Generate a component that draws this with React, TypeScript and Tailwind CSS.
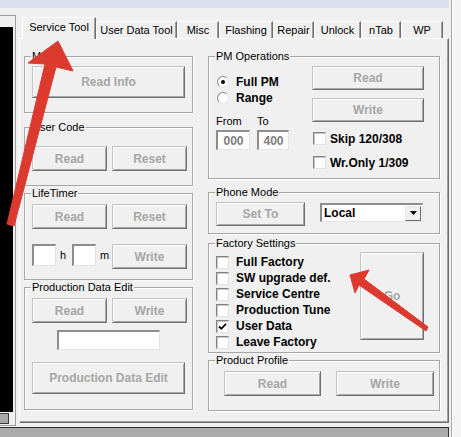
import type { ReactNode } from 'react'

const tabs = [
  { label: 'Service Tool', w: 'w-[74px]', active: true },
  { label: 'User Data Tool', w: 'w-[81px]' },
  { label: 'Misc', w: 'w-[42px]' },
  { label: 'Flashing', w: 'w-[54px]' },
  { label: 'Repair', w: 'w-[41px]' },
  { label: 'Unlock', w: 'w-[47px]' },
  { label: 'nTab', w: 'w-[40px]' },
  { label: 'WP', w: 'w-[42px]' },
]

const factoryItems = [
  { label: 'Full Factory' },
  { label: 'SW upgrade def.' },
  { label: 'Service Centre' },
  { label: 'Production Tune' },
  { label: 'User Data', checked: true },
  { label: 'Leave Factory' },
]

function Button({ label, className = '' }: { label: string; className?: string }) {
  return (
    <div
      className={`flex shrink-0 items-center justify-center bg-[#f0f0f0] border border-t-[#c2c2c2] border-l-[#c2c2c2] border-r-[#6f6f6f] border-b-[#6f6f6f] shadow-[inset_1px_1px_0_#ffffff,inset_-1px_-1px_0_#a8a8a8] text-[12px] font-bold text-[#a6a6a6] select-none ${className}`}
    >
      {label}
    </div>
  )
}

function Group({ title, className = '', children }: { title: string; className?: string; children?: ReactNode }) {
  return (
    <div className={`relative shrink-0 border border-[#a6a6a6] shadow-[inset_1px_1px_0_#ffffff,1px_1px_0_#ffffff] ${className}`}>
      <span className="absolute top-[-8px] left-[6px] bg-[#f0f0f0] px-px text-[11px] leading-[14px] text-black whitespace-nowrap">
        {title}
      </span>
      {children}
    </div>
  )
}

function Check({ checked = false }: { checked?: boolean }) {
  return (
    <div className="flex h-[13px] w-[13px] shrink-0 items-center justify-center bg-white border border-t-[#858585] border-l-[#858585] border-r-[#e2e2e2] border-b-[#e2e2e2] shadow-[inset_1px_1px_0_#c4c4c4]">
      {checked && (
        <svg width="9" height="9" viewBox="0 0 9 9">
          <path d="M1 4.5 L3.3 6.8 L8 1.8" fill="none" stroke="#000" strokeWidth="1.8" />
        </svg>
      )}
    </div>
  )
}

function Radio({ selected = false }: { selected?: boolean }) {
  return (
    <div className="ml-px flex h-[12px] w-[12px] shrink-0 items-center justify-center rounded-full bg-white border border-t-[#8a8a8a] border-l-[#8a8a8a] border-r-[#e4e4e4] border-b-[#e4e4e4]">
      {selected && <div className="h-[4px] w-[4px] rounded-full bg-black" />}
    </div>
  )
}

function Field({ className = '', children }: { className?: string; children?: ReactNode }) {
  return (
    <div
      className={`flex shrink-0 items-center justify-center bg-white border-t-2 border-l-2 border-r border-b border-t-[#8c8c8c] border-l-[#8c8c8c] border-r-[#e4e4e4] border-b-[#e4e4e4] ${className}`}
    >
      {children}
    </div>
  )
}

function Arrows() {
  return (
    <svg className="pointer-events-none absolute left-0 top-0" width="461" height="437" viewBox="0 0 461 437">
      <path
        d="M58 41 L73 71 L56 67 L14 226 L7 224 L45 64 L28 63 Z"
        fill="#dc3a2f"
        stroke="#dc3a2f"
        strokeWidth="1"
        strokeLinejoin="round"
      />
      <path
        d="M350 275 L369 270 L364 279 L428 327 L426 331 L359 285 L355 293 Z"
        fill="#dc3a2f"
        stroke="#dc3a2f"
        strokeWidth="1"
        strokeLinejoin="round"
      />
    </svg>
  )
}

export default function App() {
  return (
    <div className="relative flex h-[437px] w-[461px] overflow-hidden bg-[#f0f0f0] font-['Liberation_Sans',Arial,sans-serif] text-black">
      <div className="flex w-[449px] shrink-0 flex-col">
        {/* window title strip */}
        <div className="h-[8px] shrink-0 bg-[#dcdff0]" />

        <div className="flex h-[419px] shrink-0">
          {/* left log panel */}
          <div className="w-[16px] shrink-0 pt-[7px]">
            <div className="h-[411px] border-t border-r border-b border-[#9c9c9c] pt-[11px]">
              <div className="h-[385px] w-[13px] bg-black" />
              <div className="mt-px h-[11px] w-[9px] bg-[#a9a9a9] border-t border-r border-b border-[#3c3c3c]" />
            </div>
          </div>

          {/* tab control */}
          <div className="ml-[3px] flex w-[430px] shrink-0 flex-col">
            <div className="flex h-[30px] shrink-0 items-end pl-[3px]">
              {tabs.map(t =>
                t.active ? (
                  <div
                    key={t.label}
                    className={`${t.w} relative z-10 mb-[-1px] h-[22px] shrink-0 bg-[#f0f0f0] border-t border-l border-t-white border-l-white border-r border-r-[#6d6d6d] pt-[3px] text-center text-[11px] leading-[13px] shadow-[inset_-1px_0_0_#a0a0a0]`}
                  >
                    {t.label}
                  </div>
                ) : (
                  <div
                    key={t.label}
                    className={`${t.w} h-[17px] shrink-0 border-t border-l border-t-white border-l-white border-r border-r-[#6d6d6d] pt-[2px] text-center text-[11px] leading-[13px] shadow-[inset_-1px_0_0_#a0a0a0]`}
                  >
                    {t.label}
                  </div>
                ),
              )}
            </div>

            <div className="flex h-[385px] shrink-0 gap-[15px] border border-t-white border-l-white border-r-[#6d6d6d] border-b-[#6d6d6d] pl-[4px] pt-[17px] shadow-[inset_-1px_-1px_0_#a0a0a0]">
              {/* left column */}
              <div className="flex w-[169px] shrink-0 flex-col">
                <Group title="Main" className="h-[57px] pl-[7px] pt-[9px]">
                  <Button label="Read Info" className="h-[32px] w-[153px]" />
                </Group>

                <Group title="User Code" className="mt-[14px] h-[59px] pl-[7px] pt-[18px]">
                  <div className="flex gap-[5px]">
                    <Button label="Read" className="h-[25px] w-[75px]" />
                    <Button label="Reset" className="h-[25px] w-[75px]" />
                  </div>
                </Group>

                <Group title="LifeTimer" className="mt-[7px] h-[87px] pl-[7px] pt-[10px]">
                  <div className="flex gap-[5px]">
                    <Button label="Read" className="h-[25px] w-[75px]" />
                    <Button label="Reset" className="h-[25px] w-[75px]" />
                  </div>
                  <div className="mt-[15px] flex items-start">
                    <Field className="h-[22px] w-[24px]" />
                    <span className="w-[16px] pl-[4px] pt-[5px] text-[11px] leading-[13px]">h</span>
                    <Field className="h-[22px] w-[24px]" />
                    <span className="w-[16px] pl-[4px] pt-[5px] text-[11px] leading-[13px]">m</span>
                    <Button label="Write" className="h-[25px] w-[75px]" />
                  </div>
                </Group>

                <Group title="Production Data Edit" className="mt-[7px] h-[123px] pl-[7px] pt-[10px]">
                  <div className="flex gap-[5px]">
                    <Button label="Read" className="h-[25px] w-[75px]" />
                    <Button label="Write" className="h-[25px] w-[75px]" />
                  </div>
                  <Field className="ml-[25px] mt-[7px] h-[20px] w-[103px]" />
                  <Button label="Production Data Edit" className="mt-[12px] h-[32px] w-[153px]" />
                </Group>
              </div>

              {/* right column */}
              <div className="flex w-[232px] shrink-0 flex-col">
                <Group title="PM Operations" className="flex h-[123px] pl-[7px]">
                  <div className="flex w-[96px] shrink-0 flex-col">
                    <div className="mt-[18px] flex h-[13px] items-center gap-[7px]">
                      <Radio selected />
                      <span className="text-[12px] font-bold">Full PM</span>
                    </div>
                    <div className="mt-[3px] flex h-[13px] items-center gap-[7px]">
                      <Radio />
                      <span className="text-[12px] font-bold">Range</span>
                    </div>
                    <div className="mt-[11px] flex h-[13px] text-[11px] leading-[13px]">
                      <span className="w-[41px]">From</span>
                      <span>To</span>
                    </div>
                    <div className="mt-[2px] flex gap-[7px]">
                      <Field className="h-[20px] w-[34px]">
                        <span className="text-[12px] font-bold text-[#7c7c7c]">000</span>
                      </Field>
                      <Field className="h-[20px] w-[32px]">
                        <span className="text-[12px] font-bold text-[#7c7c7c]">400</span>
                      </Field>
                    </div>
                  </div>
                  <div className="flex w-[112px] shrink-0 flex-col pt-[9px]">
                    <Button label="Read" className="h-[24px] w-[112px]" />
                    <Button label="Write" className="mt-[8px] h-[24px] w-[112px]" />
                    <div className="mt-[10px] flex h-[13px] items-center gap-[4px] pl-px">
                      <Check />
                      <span className="text-[12px] font-bold">Skip 120/308</span>
                    </div>
                    <div className="mt-[11px] flex h-[13px] items-center gap-[4px] pl-px">
                      <Check />
                      <span className="text-[12px] font-bold">Wr.Only 1/309</span>
                    </div>
                  </div>
                </Group>

                <Group title="Phone Mode" className="mt-[13px] flex h-[42px] pl-[7px] pt-[9px]">
                  <Button label="Set To" className="h-[24px] w-[89px]" />
                  <div className="ml-[15px] mt-px flex h-[19px] w-[103px] shrink-0 items-center justify-between bg-white border-t-2 border-l-2 border-r border-b border-t-[#8c8c8c] border-l-[#8c8c8c] border-r-[#e4e4e4] border-b-[#e4e4e4] pl-[2px] pr-px">
                    <span className="text-[12px] font-bold leading-[14px]">Local</span>
                    <div className="flex h-[15px] w-[16px] items-center justify-center bg-[#f0f0f0] border border-t-[#e8e8e8] border-l-[#e8e8e8] border-r-[#6d6d6d] border-b-[#6d6d6d]">
                      <svg width="7" height="4" viewBox="0 0 7 4">
                        <path d="M0 0 L7 0 L3.5 4 Z" fill="#000" />
                      </svg>
                    </div>
                  </div>
                </Group>

                <Group title="Factory Settings" className="mt-[9px] flex h-[110px] pl-[7px]">
                  <div className="flex w-[144px] shrink-0 flex-col pt-[10px]">
                    {factoryItems.map(item => (
                      <div key={item.label} className="flex h-[16px] items-center gap-[7px]">
                        <Check checked={item.checked} />
                        <span className="whitespace-nowrap text-[12px] font-bold">{item.label}</span>
                      </div>
                    ))}
                  </div>
                  <Button label="Go" className="mt-[8px] h-[88px] w-[64px]" />
                </Group>

                <Group title="Product Profile" className="mt-[7px] flex h-[51px] pl-[15px] pt-[10px]">
                  <Button label="Read" className="h-[25px] w-[97px]" />
                  <Button label="Write" className="ml-[15px] h-[25px] w-[98px]" />
                </Group>
              </div>
            </div>
          </div>
        </div>

        {/* status bar */}
        <div className="h-[10px] shrink-0 bg-[#ababab] border-t border-r border-[#2f2f2f]" />
      </div>

      {/* right window edge */}
      <div className="flex w-[12px] shrink-0">
        <div className="w-[2px] bg-[#f0f0f0]" />
        <div className="w-px bg-[#a8a8a8]" />
        <div className="w-px bg-white" />
        <div className="flex-1 bg-[#f4f4f4]" />
      </div>

      <Arrows />
    </div>
  )
}
